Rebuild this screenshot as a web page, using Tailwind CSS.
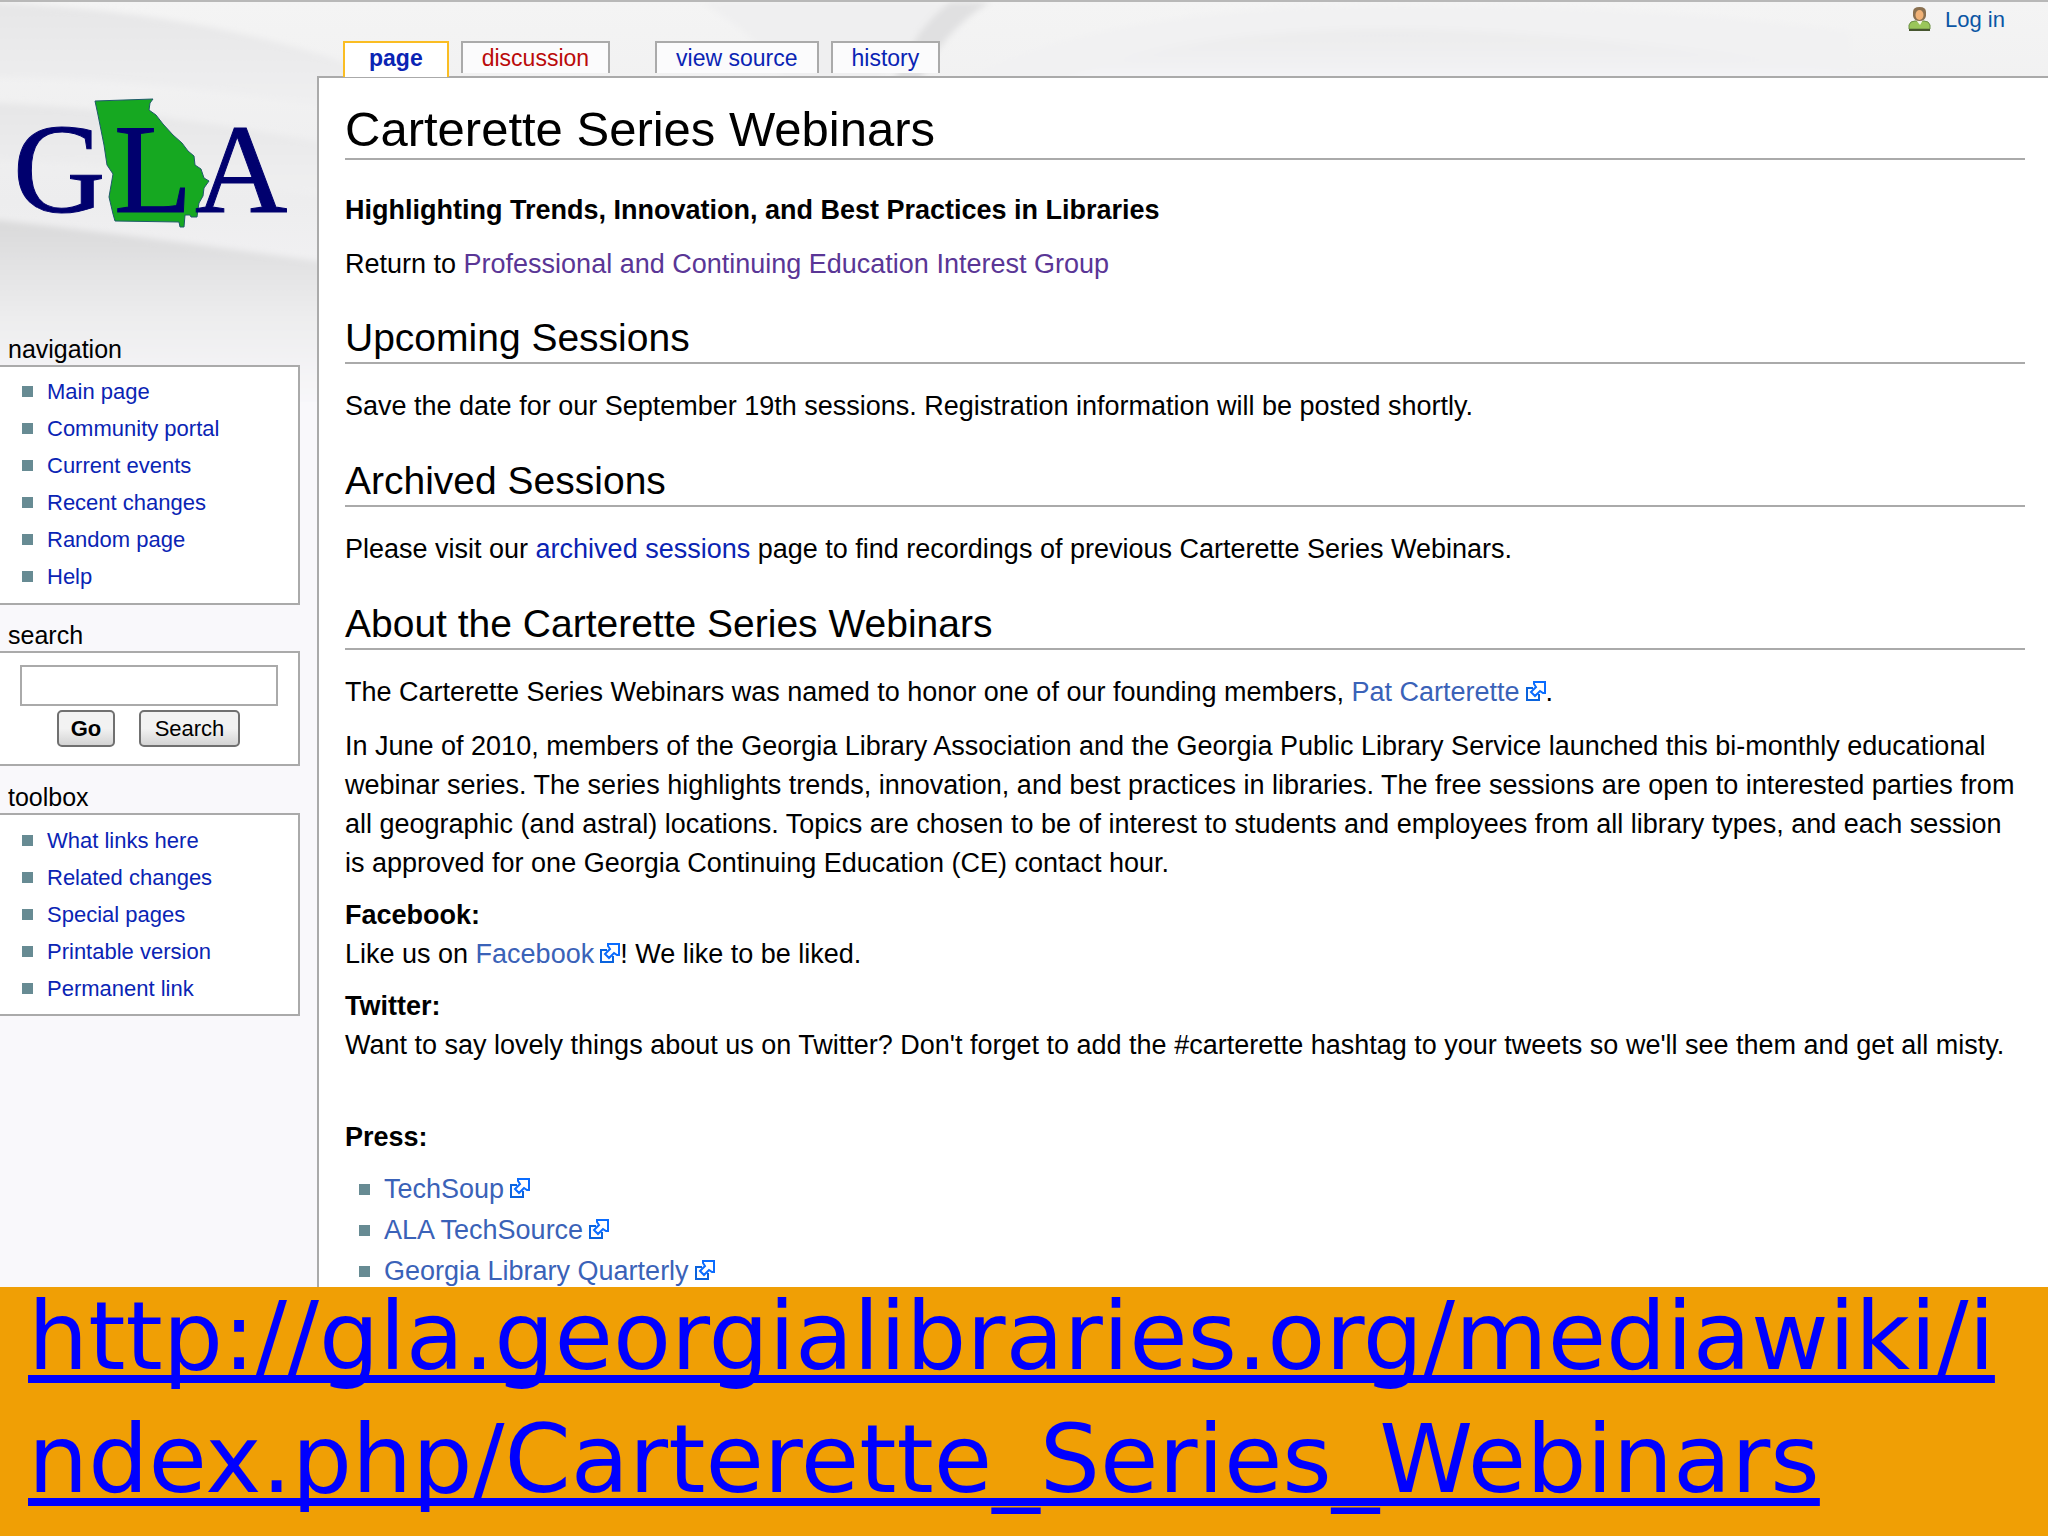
<!DOCTYPE html>
<html lang="en">
<head>
    <meta charset="UTF-8">
    <meta name="viewport" content="width=device-width, initial-scale=1.0">
    <title>Carterette Series Webinars</title>
    <script src="https://cdn.jsdelivr.net/npm/@tailwindcss/browser@4"></script>
</head>
<body class="bg-[#f9f8fb] text-black font-['Liberation_Sans',Arial,sans-serif] text-[27px] leading-[39px] min-h-screen flex flex-col">
    <svg width="0" height="0" class="hidden">
        <symbol id="ext" viewBox="0 0 20 20">
            <path d="M7 7H1v12h12v-6" fill="none" stroke="#0a63dd" stroke-width="2"/>
            <path d="M8 1h11v11h-2l-3-2-5 5-4-4 5-5-2-3z" fill="#fff" stroke="#0a6cff" stroke-width="2"/>
        </symbol>
    </svg>

    <div class="relative isolate flex border-t-2 border-[#b8b8b8]">
        <!-- page folds behind the header -->
        <svg class="absolute inset-0 -z-10 w-full h-[400px]" viewBox="0 0 2048 400" preserveAspectRatio="none">
            <defs>
                <linearGradient id="base" x1="0" y1="0" x2="0" y2="1">
                    <stop offset="0" stop-color="#f4f4f4"/>
                    <stop offset=".5" stop-color="#ededee"/>
                    <stop offset="1" stop-color="#f9f8fb"/>
                </linearGradient>
                <linearGradient id="fold" x1="0" y1="0" x2="0" y2="1">
                    <stop offset="0" stop-color="#d9d9da"/>
                    <stop offset=".55" stop-color="#eeeeef"/>
                    <stop offset="1" stop-color="#f9f8fb"/>
                </linearGradient>
                <linearGradient id="soft" x1="0" y1="0" x2="0" y2="1">
                    <stop offset="0" stop-color="#e6e6e7"/>
                    <stop offset="1" stop-color="#f0f0f1"/>
                </linearGradient>
                <linearGradient id="dome" x1="0" y1="0" x2="0" y2="1">
                    <stop offset="0" stop-color="#ebebec"/>
                    <stop offset="1" stop-color="#f6f6f8"/>
                </linearGradient>
                <filter id="blur"><feGaussianBlur stdDeviation="3"/></filter>
            </defs>
            <rect width="2048" height="400" fill="url(#base)"/>
            <g filter="url(#blur)">
                <path d="M-20 0Q200 8 360 66V112Q160 74 -20 76Z" fill="url(#soft)"/>
                <path d="M-20 100Q160 108 350 146V200Q160 160 -20 158Z" fill="url(#soft)"/>
                <path d="M-20 216Q160 236 350 264V410H-20Z" fill="url(#fold)"/>
                <path d="M700 0H960Q900 40 870 90H790Q770 40 700 0Z" fill="#efeff0"/>
                <path d="M950 0H990Q940 30 915 90H890Q910 30 950 0Z" fill="#e0e0e1"/>
                <path d="M945 90Q1060 14 1330 4Q1640 0 1850 30V90Z" fill="#f1f1f2"/>
                <path d="M1040 90Q1150 28 1400 28Q1620 32 1900 78V90Z" fill="url(#dome)"/>
            </g>
        </svg>

        <aside class="w-[317px] shrink-0">
            <a href="#" class="block h-[331px] pt-[90px]" aria-label="GLA">
                <svg class="w-[300px] h-[150px]" viewBox="0 92 300 150">
                    <path d="M95 101L153 99L150 103L149 110L156 115L163 124L173 135L182 143L188 151L194 156L195 165L201 169L204 178L209 181L204 188L203 196L199 203L198 209L197 217L191 217L190 215L185 215L184 227L180 227L179 222L115 221L113 214L109 197L113 174L107 165L104 145L98 115Z" fill="#16a821" stroke="#1e5a6a" stroke-width="1"/>
                    <g fill="#00006e" stroke="#00006e" stroke-width="1" font-family="Liberation Serif, serif" font-size="128">
                        <text x="13" y="212">G</text>
                        <text x="114" y="212">L</text>
                        <text x="195" y="212">A</text>
                    </g>
                </svg>
            </a>

            <h2 class="pl-2 text-[25px] leading-8">navigation</h2>
            <ul class="w-[300px] bg-white border-2 border-l-0 border-[#aaa] pt-[6px] pb-2 pl-[22px] text-[22px] leading-[37px] text-[#0a24b4]">
                <li class="flex items-center gap-[14px]"><i class="size-[11px] bg-[#678b93]"></i><a href="#">Main page</a></li>
                <li class="flex items-center gap-[14px]"><i class="size-[11px] bg-[#678b93]"></i><a href="#">Community portal</a></li>
                <li class="flex items-center gap-[14px]"><i class="size-[11px] bg-[#678b93]"></i><a href="#">Current events</a></li>
                <li class="flex items-center gap-[14px]"><i class="size-[11px] bg-[#678b93]"></i><a href="#">Recent changes</a></li>
                <li class="flex items-center gap-[14px]"><i class="size-[11px] bg-[#678b93]"></i><a href="#">Random page</a></li>
                <li class="flex items-center gap-[14px]"><i class="size-[11px] bg-[#678b93]"></i><a href="#">Help</a></li>
            </ul>

            <h2 class="pl-2 mt-[14px] text-[25px] leading-8"><label for="q">search</label></h2>
            <form class="w-[300px] bg-white border-2 border-l-0 border-[#aaa] pt-3 pb-[17px] pl-5 text-[22px]">
                <input id="q" type="text" class="block w-[258px] h-[41px] bg-white border-2 border-[#aaa] px-2">
                <div class="flex gap-6 mt-1 pl-[37px]">
                    <button type="button" class="h-[37px] w-[58px] rounded-[5px] border-2 border-[#707070] bg-linear-to-b from-[#f2f2f2] from-50% to-[#d4d4d4] leading-8 font-bold">Go</button>
                    <button type="button" class="h-[37px] w-[101px] rounded-[5px] border-2 border-[#707070] bg-linear-to-b from-[#f2f2f2] from-50% to-[#d4d4d4] leading-8">Search</button>
                </div>
            </form>

            <h2 class="pl-2 mt-[15px] text-[25px] leading-8">toolbox</h2>
            <ul class="w-[300px] bg-white border-2 border-l-0 border-[#aaa] py-[7px] pl-[22px] text-[22px] leading-[37px] text-[#0a24b4]">
                <li class="flex items-center gap-[14px]"><i class="size-[11px] bg-[#678b93]"></i><a href="#">What links here</a></li>
                <li class="flex items-center gap-[14px]"><i class="size-[11px] bg-[#678b93]"></i><a href="#">Related changes</a></li>
                <li class="flex items-center gap-[14px]"><i class="size-[11px] bg-[#678b93]"></i><a href="#">Special pages</a></li>
                <li class="flex items-center gap-[14px]"><i class="size-[11px] bg-[#678b93]"></i><a href="#">Printable version</a></li>
                <li class="flex items-center gap-[14px]"><i class="size-[11px] bg-[#678b93]"></i><a href="#">Permanent link</a></li>
            </ul>
        </aside>

        <div class="flex-1 min-w-0 flex flex-col">
            <header class="flex justify-between h-[74px] shrink-0 text-[#0a24b4]">
                <nav class="flex items-end pl-[26px] text-[23px] leading-7">
                    <a href="#" class="relative z-10 h-[36px] -mb-px px-6 pt-px border-2 border-b-0 border-[#fabd23] bg-white font-bold">page</a>
                    <a href="#" class="h-[32px] mb-[3px] ml-3 px-[19px] pt-px border-2 border-b-0 border-[#aaa] bg-[#fbfbfc] text-[#ba0a0a]">discussion</a>
                    <a href="#" class="h-[32px] mb-[3px] ml-[45px] px-[19px] pt-px border-2 border-b-0 border-[#aaa] bg-[#fbfbfc]">view source</a>
                    <a href="#" class="h-[32px] mb-[3px] ml-3 px-[19px] pt-px border-2 border-b-0 border-[#aaa] bg-[#fbfbfc]">history</a>
                </nav>
                <a href="#" class="flex items-start gap-[14px] pr-[43px] pt-1 text-[22px] leading-7 text-[#0b56a4]">
                    <svg class="w-[23px] h-[25px]" viewBox="0 0 23 25">
                        <path d="M1 23v-4q1-4 6-4h9q5 0 6 4v4z" fill="#9ac65a" stroke="#6d8f45" stroke-width="1"/>
                        <path d="M1 24h21" stroke="#46552f" stroke-width="2"/>
                        <path d="M8 14h7l-3 5z" fill="#f4f6e8"/>
                        <path d="M5 6q0-5 6.500-5t6.500 5v4q-1 5-6.500 5t-6.500-5z" fill="#8a7050"/>
                        <ellipse cx="11.500" cy="9" rx="4" ry="5" fill="#f0b176"/>
                    </svg>
                    Log in
                </a>
            </header>

            <main class="flex-1 bg-white border-t-2 border-l-2 border-[#aaa] pl-[26px] pr-[23px]">
                <h1 class="mt-[22px] text-[49px] leading-[58px] border-b-2 border-[#aaa]">Carterette Series Webinars</h1>
                <p class="mt-[31px] font-bold">Highlighting Trends, Innovation, and Best Practices in Libraries</p>
                <p class="mt-[15px]">Return to <a href="#" class="text-[#5a3696]">Professional and Continuing Education Interest Group</a></p>

                <h2 class="mt-[30px] mb-[23px] text-[39px] leading-[48px] border-b-2 border-[#aaa]">Upcoming Sessions</h2>
                <p>Save the date for our September 19th sessions. Registration information will be posted shortly.</p>

                <h2 class="mt-[31px] mb-[23px] text-[39px] leading-[48px] border-b-2 border-[#aaa]">Archived Sessions</h2>
                <p>Please visit our <a href="#" class="text-[#0a24b4]">archived sessions</a> page to find recordings of previous Carterette Series Webinars.</p>

                <h2 class="mt-[31px] mb-[23px] text-[39px] leading-[48px] border-b-2 border-[#aaa]">About the Carterette Series Webinars</h2>
                <p>The Carterette Series Webinars was named to honor one of our founding members, <a href="#" class="text-[#3a62b8]">Pat Carterette<svg class="inline size-5 ml-[6px] align-baseline"><use href="#ext"/></svg></a>.</p>
                <p class="mt-[15px]">In June of 2010, members of the Georgia Library Association and the Georgia Public Library Service launched this bi-monthly educational webinar series. The series highlights trends, innovation, and best practices in libraries. The free sessions are open to interested parties from all geographic (and astral) locations. Topics are chosen to be of interest to students and employees from all library types, and each session is approved for one Georgia Continuing Education (CE) contact hour.</p>
                <p class="mt-[13px]"><b>Facebook:</b><br>Like us on <a href="#" class="text-[#3a62b8]">Facebook<svg class="inline size-5 ml-[6px] align-baseline"><use href="#ext"/></svg></a>! We like to be liked.</p>
                <p class="mt-[13px]"><b>Twitter:</b><br>Want to say lovely things about us on Twitter? Don't forget to add the #carterette hashtag to your tweets so we'll see them and get all misty.</p>
                <p class="mt-[53px] font-bold">Press:</p>
                <ul class="mt-3 pl-[14px] leading-[41px] text-[#3a62b8]">
                    <li class="flex items-center gap-[14px]"><i class="size-[11px] bg-[#678b93]"></i><a href="#">TechSoup<svg class="inline size-5 ml-[6px] align-baseline"><use href="#ext"/></svg></a></li>
                    <li class="flex items-center gap-[14px]"><i class="size-[11px] bg-[#678b93]"></i><a href="#">ALA TechSource<svg class="inline size-5 ml-[6px] align-baseline"><use href="#ext"/></svg></a></li>
                    <li class="flex items-center gap-[14px]"><i class="size-[11px] bg-[#678b93]"></i><a href="#">Georgia Library Quarterly<svg class="inline size-5 ml-[6px] align-baseline"><use href="#ext"/></svg></a></li>
                </ul>
            </main>
        </div>
    </div>

    <footer class="relative flex-1 -mt-[5px] bg-[#f09f05] px-7">
        <a href="#" class="block -mt-3 font-['DejaVu_Sans',sans-serif] text-[95px] leading-[123px] text-[#0000ff] underline decoration-8 underline-offset-6 [text-decoration-skip-ink:none]">http://gla.georgialibraries.org/mediawiki/i<br>ndex.php/Carterette_Series_Webinars</a>
    </footer>
</body>
</html>
